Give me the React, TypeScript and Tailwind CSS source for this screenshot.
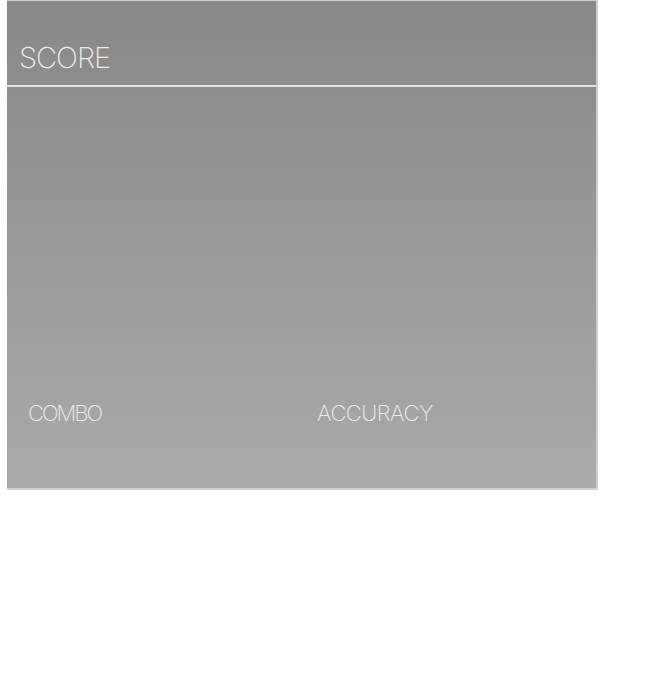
export default function App() {
  return (
    <div className="min-h-[700px] bg-white pl-[7px]">
      <div className="flex h-[490px] w-[591px] flex-col border-r-2 border-b-2 border-t border-[#cfcfcf] bg-gradient-to-b from-[#888888] to-[#aaaaaa] font-['Inter',sans-serif] text-[#ececec]">
        <div className="flex h-[84px] items-end pb-[13px] pl-[12px]">
          <span className="text-[29px] font-extralight leading-none tracking-[-1px]">SCORE</span>
        </div>
        <div className="h-[2px] bg-[#e4e4e4]" />
        <div className="flex-1" />
        <div className="flex h-[86px] items-start pl-[21px]">
          <div className="w-[289px] text-[22px] font-extralight leading-none tracking-[-2px]">COMBO</div>
          <div className="text-[22px] font-extralight leading-none tracking-[-0.5px]">ACCURACY</div>
        </div>
      </div>
    </div>
  )
}
